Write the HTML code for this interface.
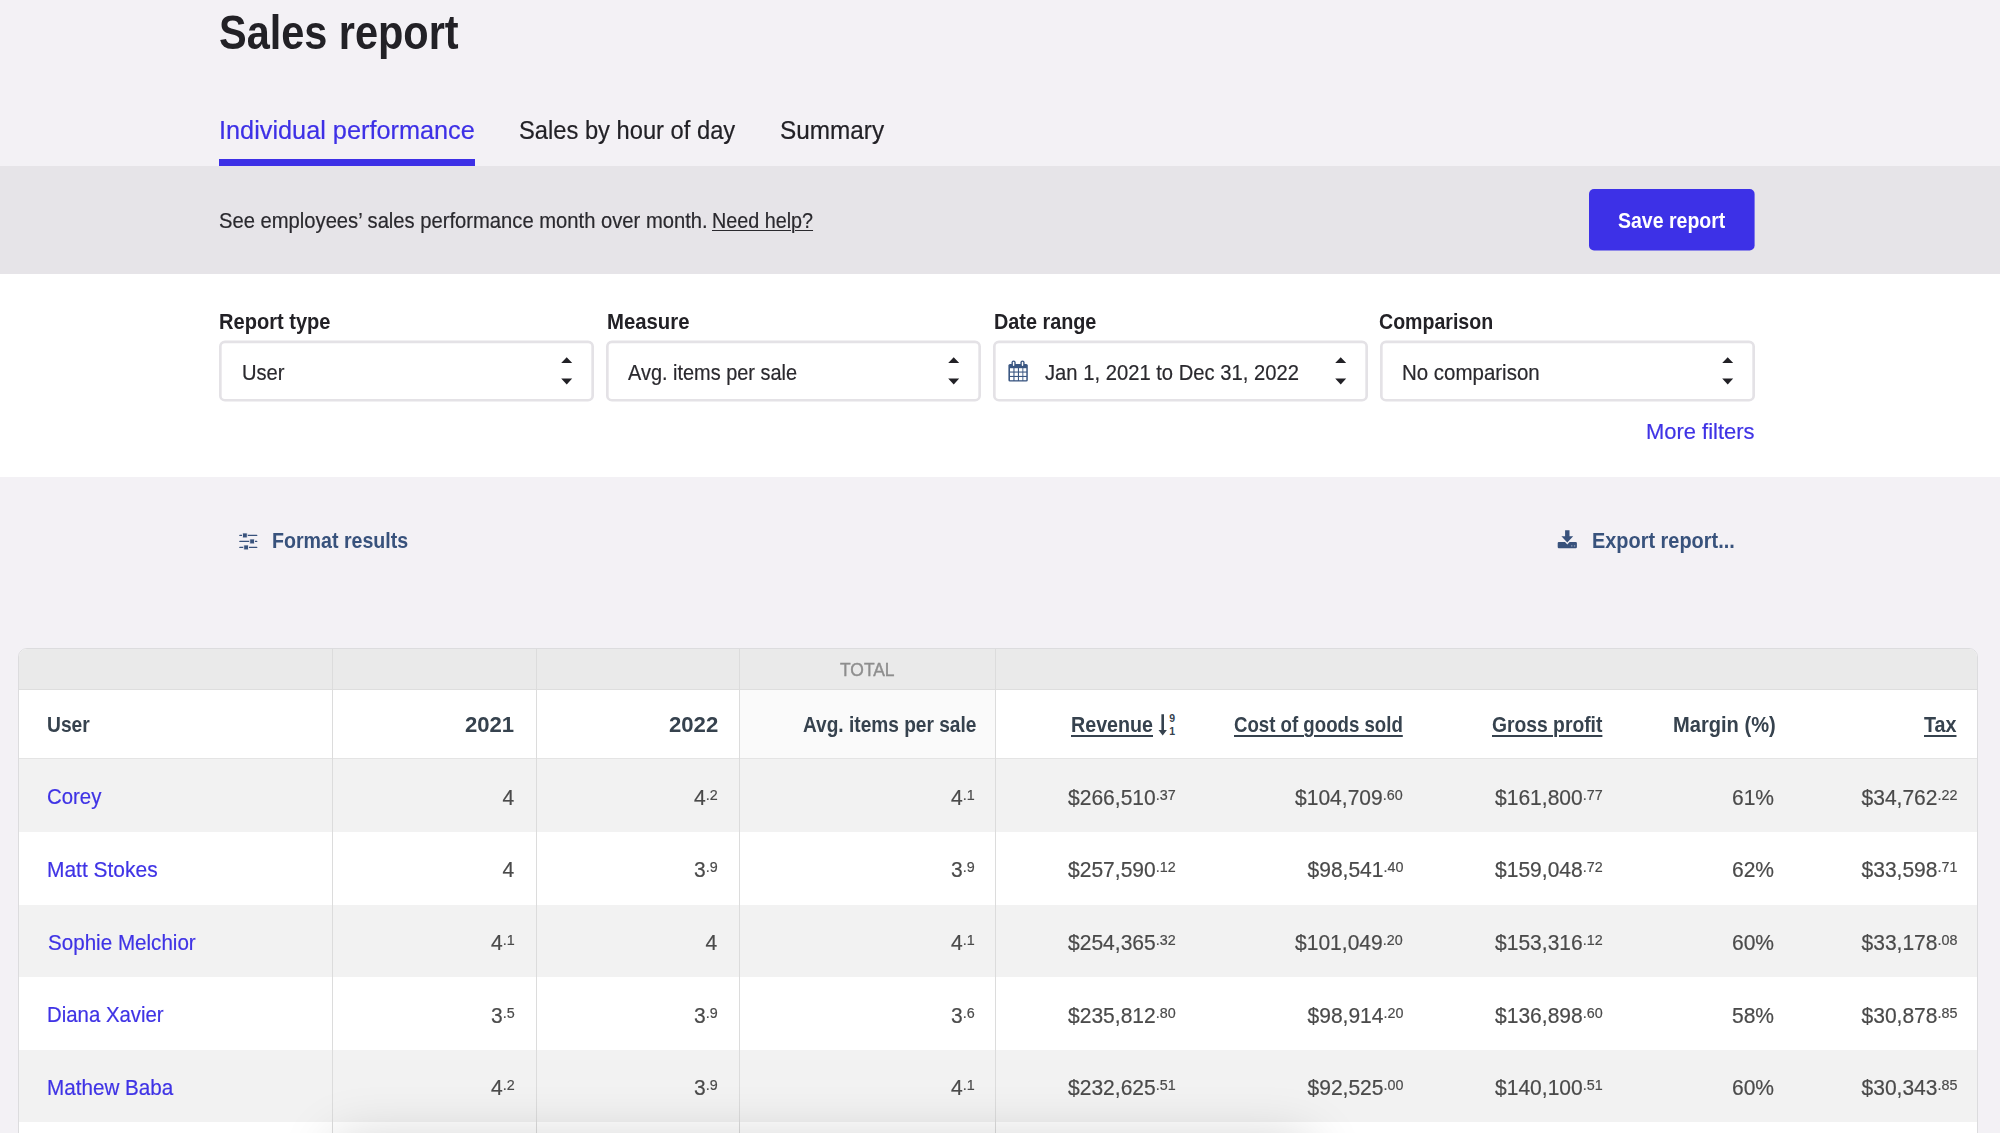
<!DOCTYPE html>
<html>
<head>
<meta charset="utf-8">
<title>Sales report</title>
<style>
*{box-sizing:border-box;margin:0;padding:0}
html,body{width:2000px;height:1133px;overflow:hidden}
body{background:#f3f1f5;font-family:"Liberation Sans",sans-serif;color:#222126;position:relative}
.t{position:absolute;white-space:nowrap}
.t u{text-decoration-thickness:2px;text-underline-offset:3px}
.t small{font-size:15px;position:relative;top:-4.9px}
.b{position:absolute}
.tabline{left:219px;top:159px;width:256px;height:7px;background:#3d30e6}
.band{left:0;top:166px;width:2000px;height:108px;background:#e6e4e8}
.btn{left:1589px;top:189px;width:166px;height:61px;border-radius:5px;background:#3d30e6}
.filters{left:0;top:274px;width:2000px;height:203px;background:#fff}
.sel{top:341px;width:375px;height:61px;border:2px solid #e4e2e6;border-radius:6px;background:#fff}
.sel svg{position:absolute;left:340px;top:12px}
svg{position:absolute;overflow:visible}
.tbl{left:18px;top:648px;width:1960px;height:520px;border:1px solid #dcdcde;border-radius:9px 9px 0 0;background:#fff;overflow:hidden}
.tbl .h1{left:0;top:0;width:1960px;height:41px;background:#eaeaea;border-bottom:1px solid #dedede}
.tbl .h2{left:0;top:41px;width:1960px;height:69px;background:#fff;border-bottom:1px solid #e4e4e4}
.tbl .avgh{left:721px;top:41px;width:256px;height:68px;background:#fafafa}
.tbl .r{left:0;width:1960px;background:#f2f2f2}
.tbl .v{top:0;width:1px;height:520px;background:#dcdcdc}
.fade{left:335px;top:1141px;width:975px;height:60px;box-shadow:0 0 56px rgba(0,0,0,.2)}
</style>
</head>
<body>
<div class="b tabline"></div>
<div class="b band"></div>
<div class="b filters"></div>
<svg style="left:0;top:0" width="2000" height="420" viewBox="0 0 2000 420">
<rect x="1589" y="189" width="165.6" height="61.5" rx="5" fill="#3d31e7"/>
<g fill="#fff" stroke="#e4e2e6" stroke-width="2.67">
<rect x="220.33" y="341.93" width="372.33" height="58.33" rx="4.6"/>
<rect x="607.33" y="341.93" width="372.33" height="58.33" rx="4.6"/>
<rect x="994.33" y="341.93" width="372.33" height="58.33" rx="4.6"/>
<rect x="1381.33" y="341.93" width="372.33" height="58.33" rx="4.6"/>
</g>
<g fill="#222126">
<path id="ud" d="M561.2 363.1 L566.7 357.2 L572.2 363.1 Z M561.2 378.4 L572.2 378.4 L566.7 384.6 Z"/>
<path d="M948.2 363.1 L953.7 357.2 L959.2 363.1 Z M948.2 378.4 L959.2 378.4 L953.7 384.6 Z"/>
<path d="M1335.2 363.1 L1340.7 357.2 L1346.2 363.1 Z M1335.2 378.4 L1346.2 378.4 L1340.7 384.6 Z"/>
<path d="M1722.2 363.1 L1727.7 357.2 L1733.2 363.1 Z M1722.2 378.4 L1733.2 378.4 L1727.7 384.6 Z"/>
</g>
</svg>
<!-- calendar icon -->
<svg style="left:1008px;top:360px" width="21" height="22" viewBox="0.2 0 21 22">
<rect x="0.6" y="4" width="19.4" height="17.6" rx="1.6" fill="#3b5782"/>
<g fill="#fff">
<rect x="2.2" y="8.2" width="3.4" height="3.3"/><rect x="6.7" y="8.2" width="3.4" height="3.3"/><rect x="11.2" y="8.2" width="3.4" height="3.3"/><rect x="15.5" y="8.2" width="3.0" height="3.3"/>
<rect x="2.2" y="12.6" width="3.4" height="3.3"/><rect x="6.7" y="12.6" width="3.4" height="3.3"/><rect x="11.2" y="12.6" width="3.4" height="3.3"/><rect x="15.5" y="12.6" width="3.0" height="3.3"/>
<rect x="2.2" y="17" width="3.4" height="3.2"/><rect x="6.7" y="17" width="3.4" height="3.2"/><rect x="11.2" y="17" width="3.4" height="3.2"/><rect x="15.5" y="17" width="3.0" height="3.2"/>
</g>
<rect x="3.7" y="0.4" width="4.2" height="6.6" rx="2.1" fill="#3b5782"/><rect x="12.6" y="0.4" width="4.2" height="6.6" rx="2.1" fill="#3b5782"/>
<rect x="5.1" y="1.8" width="1.4" height="4.2" rx="0.7" fill="#fff"/><rect x="14" y="1.8" width="1.4" height="4.2" rx="0.7" fill="#fff"/>
</svg>
<!-- format results icon -->
<svg style="left:239px;top:532px" width="19" height="18" viewBox="0 0 19 18">
<g fill="#38527c">
<rect x="0.2" y="2.7" width="18.2" height="1.4" rx="0.7"/><rect x="0.2" y="8.7" width="18.2" height="1.4" rx="0.7"/><rect x="0.2" y="14.7" width="18.2" height="1.4" rx="0.7"/>
</g>
<g fill="#38527c" stroke="#f3f1f5" stroke-width="0.9">
<rect x="3.5" y="0.9" width="4.8" height="5" rx="0.8"/><rect x="10.7" y="6.9" width="4.8" height="5" rx="0.8"/><rect x="4.7" y="12.9" width="4.8" height="5" rx="0.8"/>
</g>
</svg>
<!-- export icon -->
<svg style="left:1557px;top:530px" width="21" height="19" viewBox="0 0 21 19">
<g transform="translate(0.5 0)">
<path d="M7.6 0.2 H12 V6.2 H15.7 L9.8 12.6 L3.9 6.2 H7.6 Z" fill="#38527c"/>
<path d="M1.4 11.9 H7.5 L9.8 14.4 L12.1 11.9 H18.2 Q19.4 11.9 19.4 13.1 V17 Q19.4 18.2 18.2 18.2 H1.4 Q0.2 18.2 0.2 17 V13.1 Q0.2 11.9 1.4 11.9 Z" fill="#38527c"/>
<rect x="13.6" y="15.2" width="1.3" height="1.4" fill="#8b9ab5"/><rect x="16.4" y="15.2" width="1.3" height="1.4" fill="#8b9ab5"/>
</g>
</svg>
<!-- table -->
<div class="b tbl">
<div class="b h1"></div>
<div class="b h2"></div>
<div class="b avgh"></div>
<div class="b r" style="top:110px;height:73px"></div>
<div class="b r" style="top:256px;height:72px"></div>
<div class="b r" style="top:401px;height:72px"></div>
<div class="b v" style="left:313px"></div>
<div class="b v" style="left:517px"></div>
<div class="b v" style="left:720px"></div>
<div class="b v" style="left:976px"></div>
</div>
<!-- sort icon -->
<svg style="left:1158px;top:713px" width="20" height="24" viewBox="0 0 20 24">
<path d="M3.4 1.2 H6.0 V17 H8.9 L4.7 22.6 L0.5 17 H3.4 Z" fill="#36424e"/>
<text x="11.2" y="9.4" font-family="Liberation Sans, sans-serif" font-weight="bold" font-size="10.5" fill="#36424e">9</text>
<text x="11.2" y="22.4" font-family="Liberation Sans, sans-serif" font-weight="bold" font-size="10.5" fill="#36424e">1</text>
</svg>
<div id="txt" style="position:absolute;left:0;top:0;width:2000px;height:1133px;will-change:transform">
<div class="t" style="top:9.39px;font-size:47.5px;line-height:47.5px;color:#222126;font-weight:bold;left:218.55px;transform:scaleX(0.8727);transform-origin:left center;">Sales report</div>
<div class="t" style="top:116.59px;font-size:26px;line-height:26px;color:#3d30e6;-webkit-text-stroke:0.2px #3d30e6;left:219.18px;transform:scaleX(0.9726);transform-origin:left center;">Individual performance</div>
<div class="t" style="top:116.59px;font-size:26px;line-height:26px;color:#222126;-webkit-text-stroke:0.2px #222126;left:519.04px;transform:scaleX(0.9120);transform-origin:left center;">Sales by hour of day</div>
<div class="t" style="top:116.59px;font-size:26px;line-height:26px;color:#222126;-webkit-text-stroke:0.2px #222126;left:779.96px;transform:scaleX(0.9354);transform-origin:left center;">Summary</div>
<div class="t" style="top:210.80px;font-size:21.5px;line-height:21.5px;color:#2a292e;-webkit-text-stroke:0.2px #2a292e;left:218.98px;transform:scaleX(0.9392);transform-origin:left center;">See employees’ sales performance month over month.</div>
<div class="t" style="top:210.80px;font-size:21.5px;line-height:21.5px;color:#2a292e;-webkit-text-stroke:0.2px #2a292e;left:712.44px;transform:scaleX(0.9187);transform-origin:left center;"><u style="text-decoration-thickness:1.4px;text-underline-offset:2.4px">Need help?</u></div>
<div class="t" style="top:210.80px;font-size:21.5px;line-height:21.5px;color:#ffffff;font-weight:bold;left:1618.49px;transform:scaleX(0.9073);transform-origin:left center;">Save report</div>
<div class="t" style="top:312.40px;font-size:21.5px;line-height:21.5px;color:#222126;font-weight:bold;left:219.15px;transform:scaleX(0.9337);transform-origin:left center;">Report type</div>
<div class="t" style="top:312.40px;font-size:21.5px;line-height:21.5px;color:#222126;font-weight:bold;left:606.60px;transform:scaleX(0.9451);transform-origin:left center;">Measure</div>
<div class="t" style="top:312.40px;font-size:21.5px;line-height:21.5px;color:#222126;font-weight:bold;left:993.73px;transform:scaleX(0.9214);transform-origin:left center;">Date range</div>
<div class="t" style="top:312.40px;font-size:21.5px;line-height:21.5px;color:#222126;font-weight:bold;left:1379.09px;transform:scaleX(0.9099);transform-origin:left center;">Comparison</div>
<div class="t" style="top:362.80px;font-size:21.5px;line-height:21.5px;color:#2a292e;-webkit-text-stroke:0.2px #2a292e;left:242.16px;transform:scaleX(0.9357);transform-origin:left center;">User</div>
<div class="t" style="top:362.80px;font-size:21.5px;line-height:21.5px;color:#2a292e;-webkit-text-stroke:0.2px #2a292e;left:628.09px;transform:scaleX(0.9262);transform-origin:left center;">Avg. items per sale</div>
<div class="t" style="top:362.80px;font-size:21.5px;line-height:21.5px;color:#2a292e;-webkit-text-stroke:0.2px #2a292e;left:1044.92px;transform:scaleX(0.9399);transform-origin:left center;">Jan 1, 2021 to Dec 31, 2022</div>
<div class="t" style="top:362.80px;font-size:21.5px;line-height:21.5px;color:#2a292e;-webkit-text-stroke:0.2px #2a292e;left:1402.25px;transform:scaleX(0.9522);transform-origin:left center;">No comparison</div>
<div class="t" style="top:422.40px;font-size:21.5px;line-height:21.5px;color:#3f33e5;-webkit-text-stroke:0.2px #3f33e5;left:1646.23px;transform:scaleX(1.0204);transform-origin:left center;">More filters</div>
<div class="t" style="top:531.40px;font-size:21.5px;line-height:21.5px;color:#38527c;font-weight:bold;left:272.31px;transform:scaleX(0.9118);transform-origin:left center;">Format results</div>
<div class="t" style="top:531.40px;font-size:21.5px;line-height:21.5px;color:#38527c;font-weight:bold;left:1592.19px;transform:scaleX(0.9262);transform-origin:left center;">Export report...</div>
<div class="t" style="top:662.05px;font-size:17.5px;line-height:17.5px;color:#8e8e8e;left:839.57px;transform:scaleX(0.9957);transform-origin:left center;-webkit-text-stroke:0.4px #8e8e8e;">TOTAL</div>
<div class="t" style="top:715.00px;font-size:21.5px;line-height:21.5px;color:#36424e;font-weight:bold;left:47.42px;transform:scaleX(0.8948);transform-origin:left center;">User</div>
<div class="t" style="top:715.00px;font-size:21.5px;line-height:21.5px;color:#36424e;font-weight:bold;left:465.26px;transform:scaleX(1.0271);transform-origin:left center;">2021</div>
<div class="t" style="top:715.00px;font-size:21.5px;line-height:21.5px;color:#36424e;font-weight:bold;left:669.25px;transform:scaleX(1.0290);transform-origin:left center;">2022</div>
<div class="t" style="top:715.00px;font-size:21.5px;line-height:21.5px;color:#36424e;font-weight:bold;left:802.50px;transform:scaleX(0.8883);transform-origin:left center;">Avg. items per sale</div>
<div class="t" style="top:715.00px;font-size:21.5px;line-height:21.5px;color:#36424e;font-weight:bold;left:1071.00px;transform:scaleX(0.9149);transform-origin:left center;"><u>Revenue</u></div>
<div class="t" style="top:715.00px;font-size:21.5px;line-height:21.5px;color:#36424e;font-weight:bold;left:1234.00px;transform:scaleX(0.8670);transform-origin:left center;"><u>Cost of goods sold</u></div>
<div class="t" style="top:715.00px;font-size:21.5px;line-height:21.5px;color:#36424e;font-weight:bold;left:1492.00px;transform:scaleX(0.8972);transform-origin:left center;"><u>Gross profit</u></div>
<div class="t" style="top:715.00px;font-size:21.5px;line-height:21.5px;color:#36424e;font-weight:bold;left:1672.64px;transform:scaleX(0.9346);transform-origin:left center;">Margin (%)</div>
<div class="t" style="top:715.00px;font-size:21.5px;line-height:21.5px;color:#36424e;font-weight:bold;left:1924.00px;transform:scaleX(0.9166);transform-origin:left center;"><u>Tax</u></div>
<div class="t" style="top:786.60px;font-size:21.5px;line-height:21.5px;color:#3f33e5;-webkit-text-stroke:0.2px #3f33e5;left:47.06px;transform:scaleX(0.9480);transform-origin:left center;">Corey</div>
<div class="t" style="top:787.18px;font-size:22px;line-height:22px;color:#4a4a4a;-webkit-text-stroke:0.2px #4a4a4a;right:1485.50px;transform:scaleX(0.9550);transform-origin:right center;">4</div>
<div class="t" style="top:787.18px;font-size:22px;line-height:22px;color:#4a4a4a;-webkit-text-stroke:0.2px #4a4a4a;right:1282.50px;transform:scaleX(0.9550);transform-origin:right center;">4<small>.2</small></div>
<div class="t" style="top:787.18px;font-size:22px;line-height:22px;color:#4a4a4a;-webkit-text-stroke:0.2px #4a4a4a;right:1025.00px;transform:scaleX(0.9550);transform-origin:right center;">4<small>.1</small></div>
<div class="t" style="top:787.18px;font-size:22px;line-height:22px;color:#4a4a4a;-webkit-text-stroke:0.2px #4a4a4a;right:824.00px;transform:scaleX(0.9550);transform-origin:right center;">$266,510<small>.37</small></div>
<div class="t" style="top:787.18px;font-size:22px;line-height:22px;color:#4a4a4a;-webkit-text-stroke:0.2px #4a4a4a;right:597.00px;transform:scaleX(0.9550);transform-origin:right center;">$104,709<small>.60</small></div>
<div class="t" style="top:787.18px;font-size:22px;line-height:22px;color:#4a4a4a;-webkit-text-stroke:0.2px #4a4a4a;right:397.50px;transform:scaleX(0.9550);transform-origin:right center;">$161,800<small>.77</small></div>
<div class="t" style="top:787.18px;font-size:22px;line-height:22px;color:#4a4a4a;-webkit-text-stroke:0.2px #4a4a4a;right:225.50px;transform:scaleX(0.9550);transform-origin:right center;">61%</div>
<div class="t" style="top:787.18px;font-size:22px;line-height:22px;color:#4a4a4a;-webkit-text-stroke:0.2px #4a4a4a;right:42.50px;transform:scaleX(0.9550);transform-origin:right center;">$34,762<small>.22</small></div>
<div class="t" style="top:859.80px;font-size:21.5px;line-height:21.5px;color:#3f33e5;-webkit-text-stroke:0.2px #3f33e5;left:46.99px;transform:scaleX(0.9745);transform-origin:left center;">Matt Stokes</div>
<div class="t" style="top:859.38px;font-size:22px;line-height:22px;color:#4a4a4a;-webkit-text-stroke:0.2px #4a4a4a;right:1485.50px;transform:scaleX(0.9550);transform-origin:right center;">4</div>
<div class="t" style="top:859.38px;font-size:22px;line-height:22px;color:#4a4a4a;-webkit-text-stroke:0.2px #4a4a4a;right:1282.50px;transform:scaleX(0.9550);transform-origin:right center;">3<small>.9</small></div>
<div class="t" style="top:859.38px;font-size:22px;line-height:22px;color:#4a4a4a;-webkit-text-stroke:0.2px #4a4a4a;right:1025.00px;transform:scaleX(0.9550);transform-origin:right center;">3<small>.9</small></div>
<div class="t" style="top:859.38px;font-size:22px;line-height:22px;color:#4a4a4a;-webkit-text-stroke:0.2px #4a4a4a;right:824.00px;transform:scaleX(0.9550);transform-origin:right center;">$257,590<small>.12</small></div>
<div class="t" style="top:859.38px;font-size:22px;line-height:22px;color:#4a4a4a;-webkit-text-stroke:0.2px #4a4a4a;right:597.00px;transform:scaleX(0.9550);transform-origin:right center;">$98,541<small>.40</small></div>
<div class="t" style="top:859.38px;font-size:22px;line-height:22px;color:#4a4a4a;-webkit-text-stroke:0.2px #4a4a4a;right:397.50px;transform:scaleX(0.9550);transform-origin:right center;">$159,048<small>.72</small></div>
<div class="t" style="top:859.38px;font-size:22px;line-height:22px;color:#4a4a4a;-webkit-text-stroke:0.2px #4a4a4a;right:225.50px;transform:scaleX(0.9550);transform-origin:right center;">62%</div>
<div class="t" style="top:859.38px;font-size:22px;line-height:22px;color:#4a4a4a;-webkit-text-stroke:0.2px #4a4a4a;right:42.50px;transform:scaleX(0.9550);transform-origin:right center;">$33,598<small>.71</small></div>
<div class="t" style="top:933.00px;font-size:21.5px;line-height:21.5px;color:#3f33e5;-webkit-text-stroke:0.2px #3f33e5;left:47.75px;transform:scaleX(0.9583);transform-origin:left center;">Sophie Melchior</div>
<div class="t" style="top:931.58px;font-size:22px;line-height:22px;color:#4a4a4a;-webkit-text-stroke:0.2px #4a4a4a;right:1485.50px;transform:scaleX(0.9550);transform-origin:right center;">4<small>.1</small></div>
<div class="t" style="top:931.58px;font-size:22px;line-height:22px;color:#4a4a4a;-webkit-text-stroke:0.2px #4a4a4a;right:1282.50px;transform:scaleX(0.9550);transform-origin:right center;">4</div>
<div class="t" style="top:931.58px;font-size:22px;line-height:22px;color:#4a4a4a;-webkit-text-stroke:0.2px #4a4a4a;right:1025.00px;transform:scaleX(0.9550);transform-origin:right center;">4<small>.1</small></div>
<div class="t" style="top:931.58px;font-size:22px;line-height:22px;color:#4a4a4a;-webkit-text-stroke:0.2px #4a4a4a;right:824.00px;transform:scaleX(0.9550);transform-origin:right center;">$254,365<small>.32</small></div>
<div class="t" style="top:931.58px;font-size:22px;line-height:22px;color:#4a4a4a;-webkit-text-stroke:0.2px #4a4a4a;right:597.00px;transform:scaleX(0.9550);transform-origin:right center;">$101,049<small>.20</small></div>
<div class="t" style="top:931.58px;font-size:22px;line-height:22px;color:#4a4a4a;-webkit-text-stroke:0.2px #4a4a4a;right:397.50px;transform:scaleX(0.9550);transform-origin:right center;">$153,316<small>.12</small></div>
<div class="t" style="top:931.58px;font-size:22px;line-height:22px;color:#4a4a4a;-webkit-text-stroke:0.2px #4a4a4a;right:225.50px;transform:scaleX(0.9550);transform-origin:right center;">60%</div>
<div class="t" style="top:931.58px;font-size:22px;line-height:22px;color:#4a4a4a;-webkit-text-stroke:0.2px #4a4a4a;right:42.50px;transform:scaleX(0.9550);transform-origin:right center;">$33,178<small>.08</small></div>
<div class="t" style="top:1005.20px;font-size:21.5px;line-height:21.5px;color:#3f33e5;-webkit-text-stroke:0.2px #3f33e5;left:47.17px;transform:scaleX(0.9475);transform-origin:left center;">Diana Xavier</div>
<div class="t" style="top:1004.78px;font-size:22px;line-height:22px;color:#4a4a4a;-webkit-text-stroke:0.2px #4a4a4a;right:1485.50px;transform:scaleX(0.9550);transform-origin:right center;">3<small>.5</small></div>
<div class="t" style="top:1004.78px;font-size:22px;line-height:22px;color:#4a4a4a;-webkit-text-stroke:0.2px #4a4a4a;right:1282.50px;transform:scaleX(0.9550);transform-origin:right center;">3<small>.9</small></div>
<div class="t" style="top:1004.78px;font-size:22px;line-height:22px;color:#4a4a4a;-webkit-text-stroke:0.2px #4a4a4a;right:1025.00px;transform:scaleX(0.9550);transform-origin:right center;">3<small>.6</small></div>
<div class="t" style="top:1004.78px;font-size:22px;line-height:22px;color:#4a4a4a;-webkit-text-stroke:0.2px #4a4a4a;right:824.00px;transform:scaleX(0.9550);transform-origin:right center;">$235,812<small>.80</small></div>
<div class="t" style="top:1004.78px;font-size:22px;line-height:22px;color:#4a4a4a;-webkit-text-stroke:0.2px #4a4a4a;right:597.00px;transform:scaleX(0.9550);transform-origin:right center;">$98,914<small>.20</small></div>
<div class="t" style="top:1004.78px;font-size:22px;line-height:22px;color:#4a4a4a;-webkit-text-stroke:0.2px #4a4a4a;right:397.50px;transform:scaleX(0.9550);transform-origin:right center;">$136,898<small>.60</small></div>
<div class="t" style="top:1004.78px;font-size:22px;line-height:22px;color:#4a4a4a;-webkit-text-stroke:0.2px #4a4a4a;right:225.50px;transform:scaleX(0.9550);transform-origin:right center;">58%</div>
<div class="t" style="top:1004.78px;font-size:22px;line-height:22px;color:#4a4a4a;-webkit-text-stroke:0.2px #4a4a4a;right:42.50px;transform:scaleX(0.9550);transform-origin:right center;">$30,878<small>.85</small></div>
<div class="t" style="top:1078.40px;font-size:21.5px;line-height:21.5px;color:#3f33e5;-webkit-text-stroke:0.2px #3f33e5;left:47.07px;transform:scaleX(0.9610);transform-origin:left center;">Mathew Baba</div>
<div class="t" style="top:1076.98px;font-size:22px;line-height:22px;color:#4a4a4a;-webkit-text-stroke:0.2px #4a4a4a;right:1485.50px;transform:scaleX(0.9550);transform-origin:right center;">4<small>.2</small></div>
<div class="t" style="top:1076.98px;font-size:22px;line-height:22px;color:#4a4a4a;-webkit-text-stroke:0.2px #4a4a4a;right:1282.50px;transform:scaleX(0.9550);transform-origin:right center;">3<small>.9</small></div>
<div class="t" style="top:1076.98px;font-size:22px;line-height:22px;color:#4a4a4a;-webkit-text-stroke:0.2px #4a4a4a;right:1025.00px;transform:scaleX(0.9550);transform-origin:right center;">4<small>.1</small></div>
<div class="t" style="top:1076.98px;font-size:22px;line-height:22px;color:#4a4a4a;-webkit-text-stroke:0.2px #4a4a4a;right:824.00px;transform:scaleX(0.9550);transform-origin:right center;">$232,625<small>.51</small></div>
<div class="t" style="top:1076.98px;font-size:22px;line-height:22px;color:#4a4a4a;-webkit-text-stroke:0.2px #4a4a4a;right:597.00px;transform:scaleX(0.9550);transform-origin:right center;">$92,525<small>.00</small></div>
<div class="t" style="top:1076.98px;font-size:22px;line-height:22px;color:#4a4a4a;-webkit-text-stroke:0.2px #4a4a4a;right:397.50px;transform:scaleX(0.9550);transform-origin:right center;">$140,100<small>.51</small></div>
<div class="t" style="top:1076.98px;font-size:22px;line-height:22px;color:#4a4a4a;-webkit-text-stroke:0.2px #4a4a4a;right:225.50px;transform:scaleX(0.9550);transform-origin:right center;">60%</div>
<div class="t" style="top:1076.98px;font-size:22px;line-height:22px;color:#4a4a4a;-webkit-text-stroke:0.2px #4a4a4a;right:42.50px;transform:scaleX(0.9550);transform-origin:right center;">$30,343<small>.85</small></div>
</div>
<div class="b fade"></div>
</body>
</html>
